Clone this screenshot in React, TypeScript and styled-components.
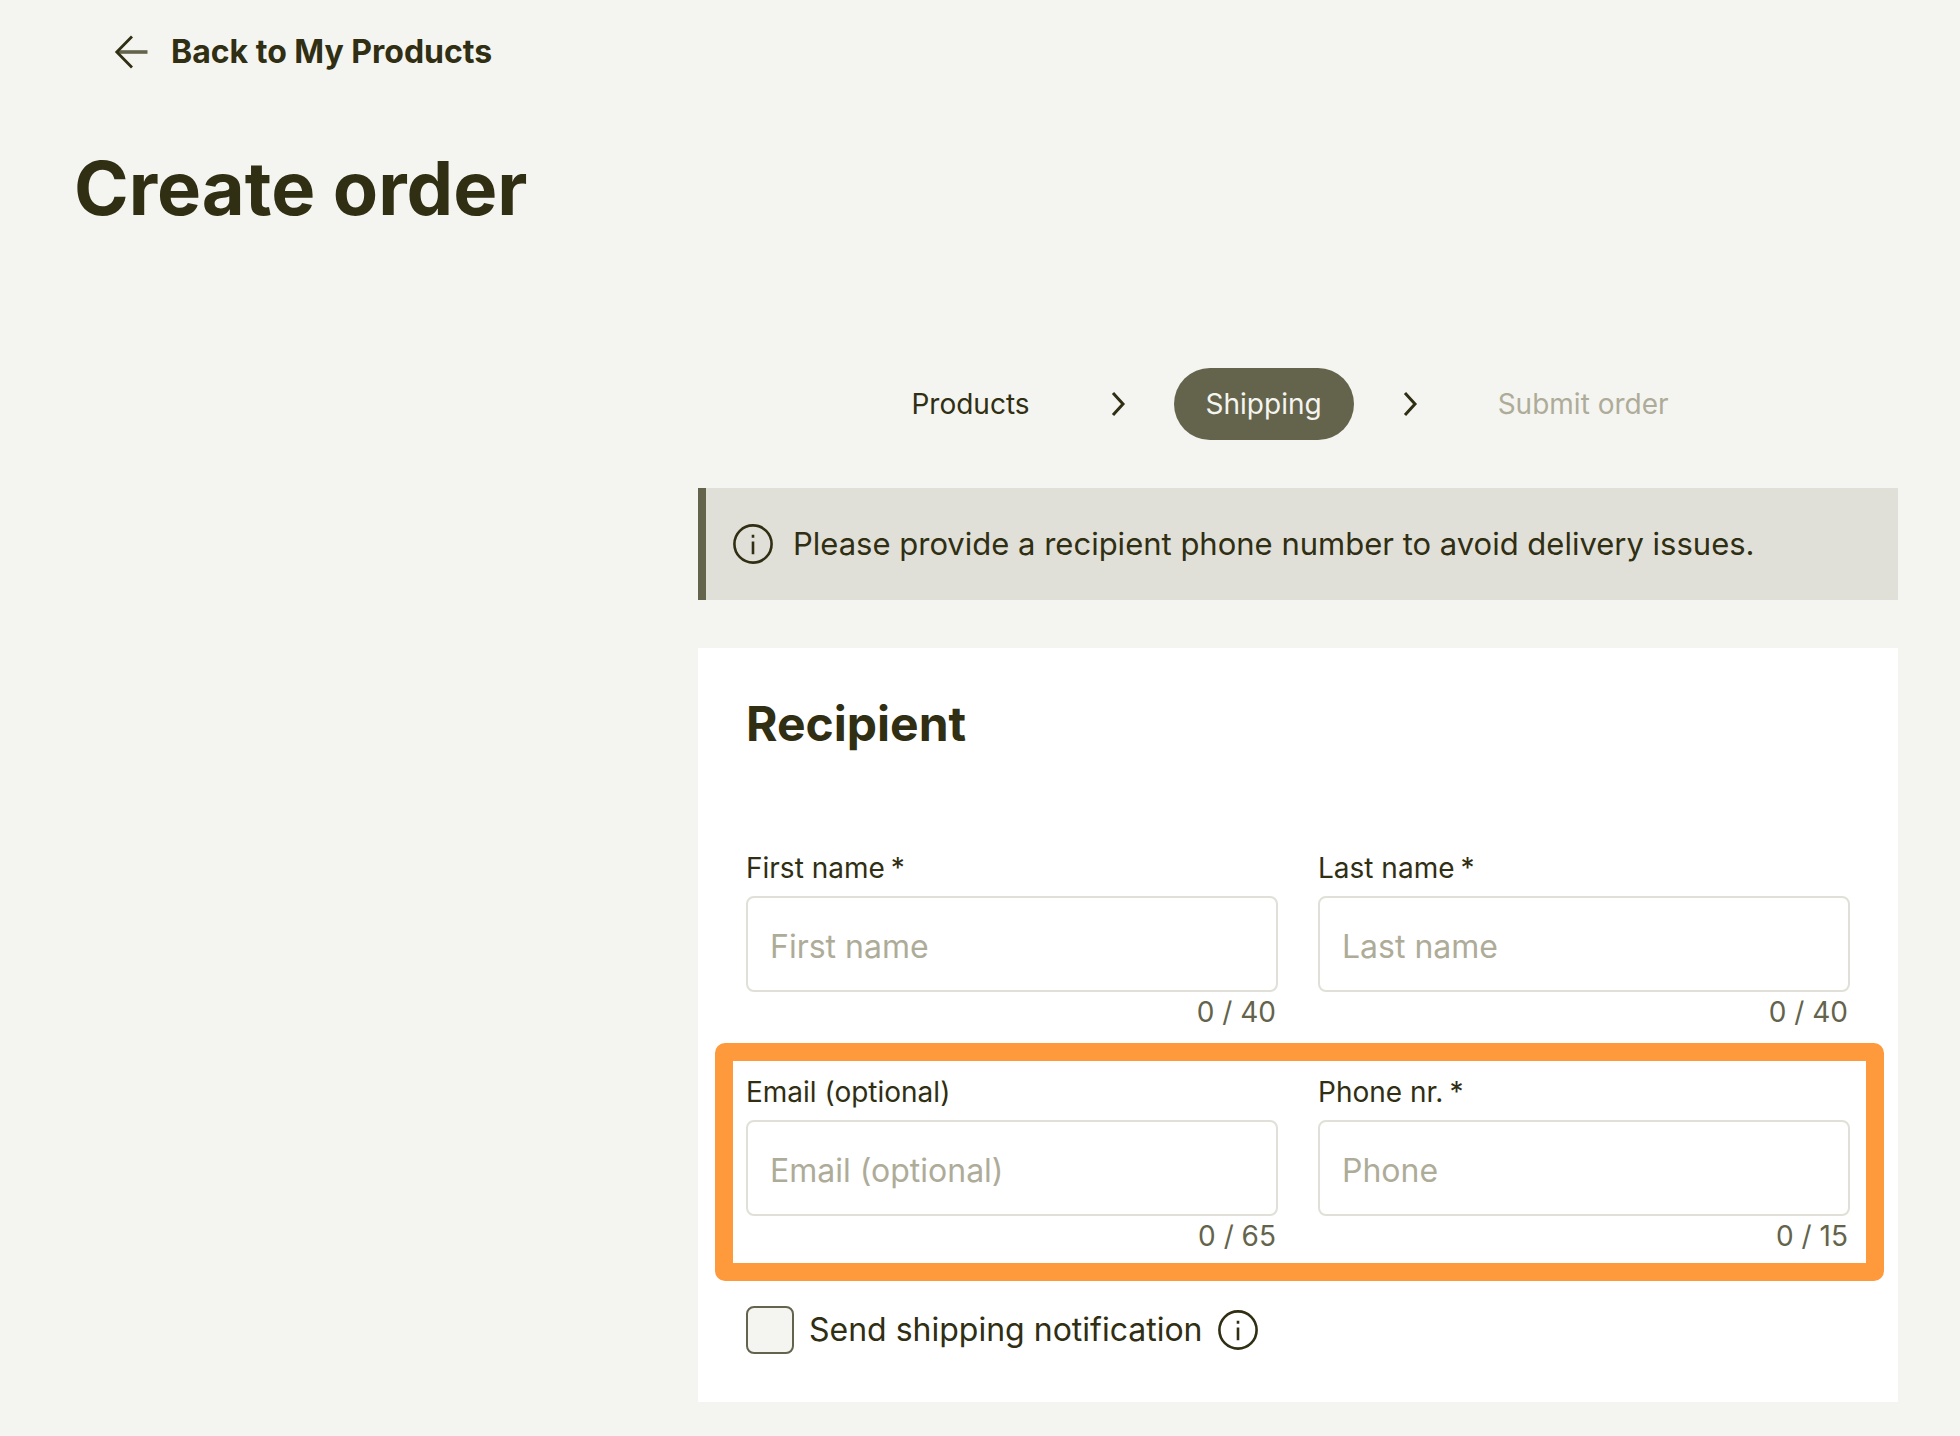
import React, { useState } from "react";
import styled, { createGlobalStyle } from "styled-components";

const ink = "#302e13";
const olive = "#64634c";
const muted = "#aeac99";
const line = "#e0e0d8";
const paper = "#f4f5f0";

const GlobalStyle = createGlobalStyle`
  *, *::before, *::after { box-sizing: border-box; }
  body {
    margin: 0;
    background: ${paper};
    color: ${ink};
    font-family: Inter, "Liberation Sans", sans-serif;
    font-size: 32px;
    line-height: 40px;
  }
`;

const Page = styled.div`
  padding: 32px 62px 34px 74px;
`;

const BackLink = styled.a`
  display: flex;
  align-items: center;
  gap: 20px;
  width: fit-content;
  margin-left: 37px;
  color: ${ink};
  font-weight: 700;
  text-decoration: none;
`;

const Title = styled.h1`
  margin: 76px 0 140px;
  font-size: 74px;
  font-weight: 700;
  line-height: 80px;
`;

const Layout = styled.div`
  display: grid;
  grid-template-columns: 13fr 25fr;
`;

const Main = styled.main`
  grid-column: 2;
  display: flex;
  flex-direction: column;
  gap: 48px;
  min-width: 0;
`;

const Steps = styled.nav`
  display: flex;
  align-items: center;
  justify-content: center;
  gap: 48px;
  padding-right: 16px;
`;

const Step = styled.button<{ $state: "done" | "current" | "next" }>`
  height: 72px;
  padding: 0 32px;
  border: 0;
  border-radius: 36px;
  font: inherit;
  font-size: 28px;
  background: ${(p) => (p.$state === "current" ? olive : "transparent")};
  color: ${(p) =>
    p.$state === "current" ? paper : p.$state === "next" ? muted : ink};
`;

const Notice = styled.p`
  display: flex;
  align-items: center;
  gap: 20px;
  margin: 0;
  padding: 36px 27px;
  border-left: 8px solid ${olive};
  background: ${line};
  font-size: 31px;
`;

const Card = styled.form`
  display: flex;
  flex-direction: column;
  padding: 48px;
  background: #fff;
`;

const CardTitle = styled.h2`
  margin: 0 0 96px;
  font-size: 48px;
  font-weight: 700;
  line-height: 56px;
`;

const FieldRow = styled.div<{ $highlighted?: boolean }>`
  position: relative;
  display: grid;
  grid-template-columns: 1fr 1fr;
  gap: 40px;
  margin-bottom: ${(p) => (p.$highlighted ? 50 : 40)}px;
`;

const Highlight = styled.div`
  position: absolute;
  inset: -29px -34px -25px -31px;
  border: 18px solid #ff9a3c;
  border-radius: 10px;
  pointer-events: none;
`;

const FieldBox = styled.div`
  display: flex;
  flex-direction: column;
  min-width: 0;
`;

const Label = styled.label`
  display: flex;
  gap: 6px;
  margin-bottom: 8px;
  font-size: 28px;
`;

const TextInput = styled.input`
  width: 100%;
  height: 96px;
  padding: 4px 22px 0;
  border: 2px solid ${line};
  border-radius: 8px;
  background: #fff;
  color: ${ink};
  font: inherit;
  &::placeholder {
    color: ${muted};
    opacity: 1;
  }
`;

const Counter = styled.span`
  align-self: flex-end;
  padding-right: 2px;
  color: ${olive};
  font-size: 28px;
`;

const CheckRow = styled.div`
  display: flex;
  align-items: center;
  gap: 15px;
`;

const CheckLabel = styled.label`
  display: flex;
  align-items: center;
  gap: 15px;
`;

const Checkbox = styled.input`
  appearance: none;
  width: 48px;
  height: 48px;
  margin: 0;
  border: 2px solid ${olive};
  border-radius: 8px;
  background: ${paper};
  &:checked {
    background: ${olive};
  }
`;

const InfoButton = styled.button`
  display: flex;
  padding: 0;
  border: 0;
  background: none;
  color: inherit;
`;

const Icon = styled.svg`
  flex: none;
  display: block;
  fill: none;
  stroke: currentColor;
`;

const InfoIcon = () => (
  <Icon width="40" height="40" viewBox="0 0 40 40" strokeWidth="2.6" aria-hidden="true">
    <circle cx="20" cy="20" r="18.6" />
    <path d="M20 17.600v12.600M20 10.800v3" />
  </Icon>
);

const Chevron = () => (
  <Icon width="16" height="26" viewBox="0 0 16 26" strokeWidth="3" aria-hidden="true">
    <path d="M3 2l10 11L3 24" />
  </Icon>
);

const BackArrow = () => (
  <Icon width="40" height="40" viewBox="0 0 40 40" strokeWidth="2.8" aria-hidden="true">
    <path d="M6 20H36.500" stroke={olive} strokeWidth="3.6" />
    <path d="M21 4.500L5.800 20l15.200 15.500" />
  </Icon>
);

type FieldProps = {
  id: string;
  label: string;
  placeholder: string;
  max: number;
  required?: boolean;
};

function Field({ id, label, placeholder, max, required }: FieldProps) {
  const [value, setValue] = useState("");
  return (
    <FieldBox>
      <Label htmlFor={id}>
        {label}
        {required && <span>*</span>}
      </Label>
      <TextInput
        id={id}
        value={value}
        maxLength={max}
        placeholder={placeholder}
        required={required}
        onChange={(e) => setValue(e.target.value)}
      />
      <Counter>
        {value.length} / {max}
      </Counter>
    </FieldBox>
  );
}

export default function App() {
  return (
    <Page>
      <GlobalStyle />
      <BackLink href="#products">
        <BackArrow />
        Back to My Products
      </BackLink>
      <Title>Create order</Title>
      <Layout>
        <Main>
          <Steps aria-label="Order steps">
            <Step type="button" $state="done">Products</Step>
            <Chevron />
            <Step type="button" $state="current" aria-current="step">Shipping</Step>
            <Chevron />
            <Step type="button" $state="next">Submit order</Step>
          </Steps>
          <Notice>
            <InfoIcon />
            Please provide a recipient phone number to avoid delivery issues.
          </Notice>
          <Card>
            <CardTitle>Recipient</CardTitle>
            <FieldRow>
              <Field id="first-name" label="First name" placeholder="First name" max={40} required />
              <Field id="last-name" label="Last name" placeholder="Last name" max={40} required />
            </FieldRow>
            <FieldRow $highlighted>
              <Field id="email" label="Email (optional)" placeholder="Email (optional)" max={65} />
              <Field id="phone" label="Phone nr." placeholder="Phone" max={15} required />
              <Highlight />
            </FieldRow>
            <CheckRow>
              <CheckLabel>
                <Checkbox type="checkbox" />
                Send shipping notification
              </CheckLabel>
              <InfoButton type="button" aria-label="About shipping notifications">
                <InfoIcon />
              </InfoButton>
            </CheckRow>
          </Card>
        </Main>
      </Layout>
    </Page>
  );
}
